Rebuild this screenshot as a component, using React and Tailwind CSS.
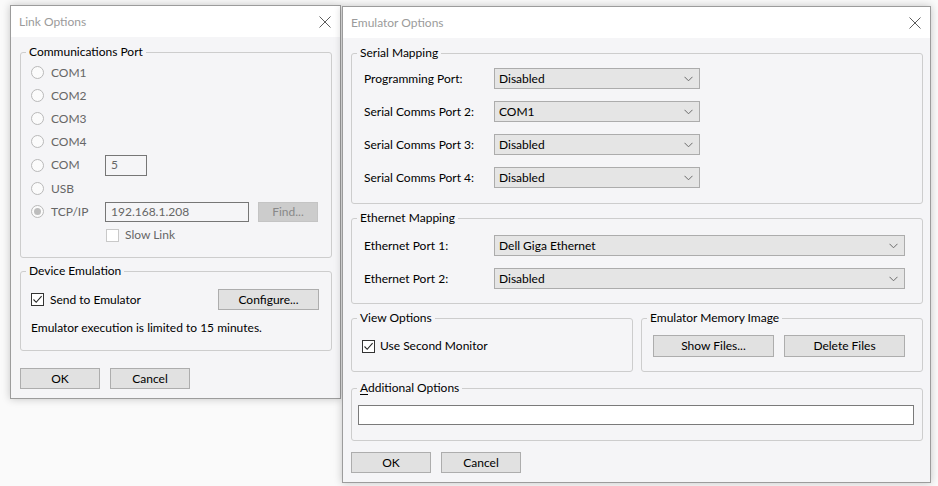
import React from 'react';

const CloseIcon = () => (
  <svg width="12" height="12" viewBox="0 0 12 12" className="text-[#5c5c5c]">
    <path d="M0.5 0.5L11.5 11.5M11.5 0.5L0.5 11.5" stroke="currentColor" strokeWidth="1" fill="none" />
  </svg>
);

const TitleBar = ({ title }) => (
  <div className="flex h-[31px] items-center justify-between bg-white pl-[8px] pr-[9px]">
    <span className="text-[12px] leading-[16px] text-[#9b9b9b]">{title}</span>
    <CloseIcon />
  </div>
);

const Group = ({ legend, className = '', children }) => (
  <fieldset className={`min-w-0 rounded-[3px] border border-[#cdcdcd] ${className}`}>
    <legend className="ml-[5px] px-[3px] text-[12px] leading-[16px] text-black">{legend}</legend>
    {children}
  </fieldset>
);

const Radio = ({ label, checked }) => (
  <div className="flex w-[74px] items-center">
    <span className="flex h-[13px] w-[13px] items-center justify-center rounded-full border border-[#b9b9b9] bg-[#fbfbfb]">
      {checked && <span className="h-[7px] w-[7px] rounded-full bg-[#bdbdbd]" />}
    </span>
    <span className="ml-[7px] text-[12px] text-[#666666]">{label}</span>
  </div>
);

const Check = ({ checked, disabled }) => (
  <span
    className={`flex h-[13px] w-[13px] items-center justify-center border ${
      disabled ? 'border-[#c9c9c9] bg-white' : 'border-[#333333] bg-white'
    }`}
  >
    {checked && (
      <svg width="11" height="11" viewBox="0 0 11 11">
        <path d="M1.5 5.5L4.2 8.3L9.6 2.2" stroke="#262626" strokeWidth="1.1" fill="none" />
      </svg>
    )}
  </span>
);

const Button = ({ children, className = '' }) => (
  <div
    className={`flex items-center justify-center border border-[#adadad] bg-[#e1e1e1] text-[12px] text-black ${className}`}
  >
    {children}
  </div>
);

const Select = ({ value, className = '' }) => (
  <div
    className={`flex h-[21px] items-center justify-between border border-[#acacac] bg-[#e5e5e5] pl-[4px] pr-[6px] text-[12px] text-black ${className}`}
  >
    <span>{value}</span>
    <svg width="9" height="6" viewBox="0 0 9 6">
      <path d="M0.5 0.8L4.5 4.8L8.5 0.8" stroke="#6b6b6b" strokeWidth="1" fill="none" />
    </svg>
  </div>
);

const LinkOptions = () => (
  <div className="flex w-[331px] flex-col border border-[#9c9c9c] bg-[#f5f5f7] shadow-[0_0_8px_rgba(0,0,0,0.22)]">
    <TitleBar title="Link Options" />
    <div className="flex flex-col pl-[9px] pr-[8px] pt-[7px] pb-[9px]">
      <Group legend="Communications Port">
        <div className="flex flex-col pl-[10px] pt-[1px] pb-[10px]">
          <div className="flex h-[23px] items-center"><Radio label="COM1" /></div>
          <div className="flex h-[23px] items-center"><Radio label="COM2" /></div>
          <div className="flex h-[23px] items-center"><Radio label="COM3" /></div>
          <div className="flex h-[23px] items-center"><Radio label="COM4" /></div>
          <div className="flex h-[24px] items-center">
            <Radio label="COM" />
            <div className="flex h-[21px] w-[42px] items-center border border-[#767676] pl-[5px] text-[12px] text-[#666666]">5</div>
          </div>
          <div className="flex h-[23px] items-center"><Radio label="USB" /></div>
          <div className="flex h-[23px] items-center">
            <Radio label="TCP/IP" checked />
            <div className="flex h-[20px] w-[144px] items-center border border-[#767676] pl-[5px] text-[12px] text-[#666666]">
              192.168.1.208
            </div>
            <div className="ml-[9px] flex h-[20px] w-[60px] items-center justify-center border border-[#c4c4c4] bg-[#cccccc] text-[12px] text-[#888888]">
              Find...
            </div>
          </div>
          <div className="flex h-[24px] items-center pl-[75px]">
            <Check disabled />
            <span className="ml-[6px] text-[12px] text-[#666666]">Slow Link</span>
          </div>
        </div>
      </Group>
      <Group legend="Device Emulation" className="mt-[5px]">
        <div className="flex flex-col pl-[10px] pr-[12px] pt-[10px] pb-[14px]">
          <div className="flex h-[21px] items-center justify-between">
            <div className="flex items-center">
              <Check checked />
              <span className="ml-[6px] text-[12px] text-black">Send to Emulator</span>
            </div>
            <Button className="h-[21px] w-[101px]">Configure...</Button>
          </div>
          <div className="mt-[10px] h-[16px] text-[12px] leading-[16px] text-black">
            Emulator execution is limited to 15 minutes.
          </div>
        </div>
      </Group>
      <div className="mt-[17px] flex gap-[10px]">
        <Button className="h-[21px] w-[80px]">OK</Button>
        <Button className="h-[21px] w-[80px]">Cancel</Button>
      </div>
    </div>
  </div>
);

const MapRow = ({ label, value, selectClass }) => (
  <div className="flex h-[21px] items-center">
    <span className="w-[130px] text-[12px] text-black">{label}</span>
    <Select value={value} className={selectClass} />
  </div>
);

const EmulatorOptions = () => (
  <div className="mt-[1px] flex w-[589px] flex-col border border-[#9c9c9c] bg-[#f5f5f7] shadow-[0_0_8px_rgba(0,0,0,0.22)]">
    <TitleBar title="Emulator Options" />
    <div className="flex flex-col pl-[8px] pr-[7px] pt-[7px] pb-[9px]">
      <Group legend="Serial Mapping">
        <div className="flex flex-col gap-[12px] pl-[12px] pt-[7px] pb-[15px]">
          <MapRow label="Programming Port:" value="Disabled" selectClass="w-[206px]" />
          <MapRow label="Serial Comms Port 2:" value="COM1" selectClass="w-[206px]" />
          <MapRow label="Serial Comms Port 3:" value="Disabled" selectClass="w-[206px]" />
          <MapRow label="Serial Comms Port 4:" value="Disabled" selectClass="w-[206px]" />
        </div>
      </Group>
      <Group legend="Ethernet Mapping" className="mt-[6px]">
        <div className="flex flex-col gap-[12px] pl-[12px] pt-[9px] pb-[14px]">
          <MapRow label="Ethernet Port 1:" value="Dell Giga Ethernet" selectClass="w-[411px]" />
          <MapRow label="Ethernet Port 2:" value="Disabled" selectClass="w-[411px]" />
        </div>
      </Group>
      <div className="mt-[6px] grid grid-cols-2 gap-[8px]">
        <Group legend="View Options">
          <div className="mt-[9px] mb-[14px] flex h-[22px] items-center pl-[10px]">
            <Check checked />
            <span className="ml-[5px] text-[12px] text-black">Use Second Monitor</span>
          </div>
        </Group>
        <Group legend="Emulator Memory Image">
          <div className="flex gap-[10px] pl-[11px] pt-[9px] pb-[14px]">
            <Button className="h-[22px] w-[121px]">Show Files...</Button>
            <Button className="h-[22px] w-[121px]">Delete Files</Button>
          </div>
        </Group>
      </div>
      <Group
        legend={
          <>
            <span className="underline underline-offset-[2px]">A</span>dditional Options
          </>
        }
        className="mt-[8px]"
      >
        <div className="pl-[6px] pt-[9px] pb-[15px]">
          <div className="h-[20px] w-[556px] border border-[#7a7a7a] bg-white" />
        </div>
      </Group>
      <div className="mt-[11px] flex gap-[10px]">
        <Button className="h-[21px] w-[80px]">OK</Button>
        <Button className="h-[21px] w-[80px]">Cancel</Button>
      </div>
    </div>
  </div>
);

export default function App() {
  return (
    <div className="flex h-[486px] w-[938px] items-start gap-[1px] overflow-hidden bg-[#fafafa] pl-[10px] pt-[5px] font-['Lato',sans-serif]">
      <LinkOptions />
      <EmulatorOptions />
    </div>
  );
}
